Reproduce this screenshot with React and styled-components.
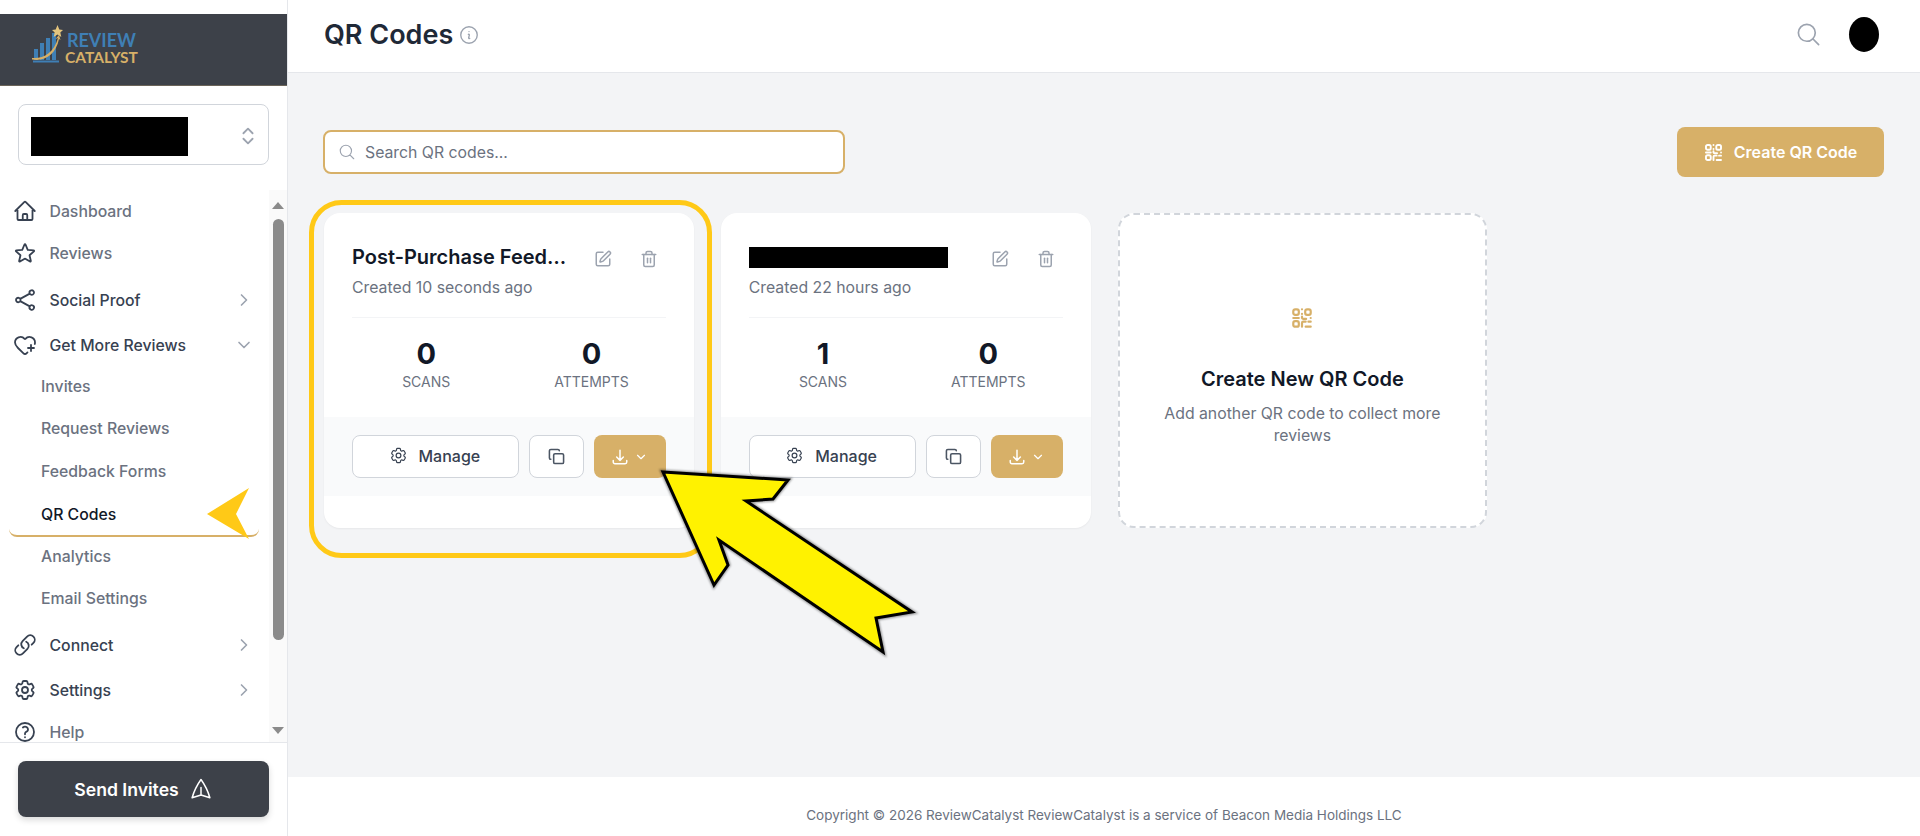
import React from 'react';
import styled, { createGlobalStyle } from 'styled-components';
import { ChevronRight, ChevronDown, HeartPlus, Copy, ChevronsUpDown, SquarePen, Trash2 } from 'lucide-react';
import {
  HiOutlineHome,
  HiOutlineStar,
  HiOutlineShare,
  HiOutlineLink,
  HiOutlineCog6Tooth,
  HiOutlineQuestionMarkCircle,
  HiOutlinePaperAirplane,
  HiOutlineInformationCircle,
  HiOutlineMagnifyingGlass,
  HiOutlineArrowDownTray,
} from 'react-icons/hi2';

const GOLD = '#d7b068';

const GlobalStyle = createGlobalStyle`
  html, body {
    margin: 0;
    padding: 0;
    height: 100%;
    overflow: hidden;
    font-family: Inter, 'Liberation Sans', sans-serif;
    background: #fff;
  }
  * { box-sizing: border-box; }
`;

const Page = styled.div`
  position: relative;
  display: flex;
  width: 1920px;
  height: 836px;
  overflow: hidden;
`;

const Sidebar = styled.aside`
  width: 288px;
  height: 100%;
  flex: none;
  display: flex;
  flex-direction: column;
  padding-top: 14px;
  background: #fff;
  border-right: 1px solid #e5e7eb;
`;

const Brand = styled.div`
  height: 72px;
  flex: none;
  display: flex;
  align-items: flex-start;
  gap: 2px;
  padding: 11px 0 0 31px;
  background: #3d4149;
  border-bottom: 1px solid #6b6459;
`;

const BrandText = styled.div`
  display: flex;
  flex-direction: column;
  align-items: center;
  margin-top: 7px;
  font-family: Lato, sans-serif;
  font-weight: 700;
  line-height: 17px;
`;

const BrandLine = styled.span`
  color: ${(p) => p.$color};
  font-size: ${(p) => p.$size}px;
`;

const Selector = styled.div`
  margin: 18px 18px 0;
  height: 61px;
  flex: none;
  display: flex;
  align-items: center;
  justify-content: space-between;
  padding: 3px 9px 0 12px;
  border: 1px solid #d1d5db;
  border-radius: 8px;
  color: #9ca3af;
`;

const Redacted = styled.div`
  background: #000;
  width: ${(p) => p.$w}px;
  height: ${(p) => p.$h}px;
`;

const NavArea = styled.div`
  flex: 1;
  min-height: 0;
  display: flex;
  margin-top: 25px;
`;

const NavList = styled.nav`
  flex: 1;
  min-width: 0;
  overflow: hidden;
`;

const NavRow = styled.div`
  height: 42px;
  margin-top: ${(p) => p.$top || 0}px;
  display: flex;
  align-items: center;
  padding: 0 16px 0 13px;
  font-size: 15.8px;
  font-weight: 500;
  color: ${(p) => (p.$muted ? '#6b7280' : '#374151')};

  & > svg:first-child {
    width: 24px;
    height: 24px;
    color: #374151;
    flex: none;
    margin-right: 12.5px;
    stroke-width: 1.8;
  }
`;

const NavLabel = styled.span`
  flex: 1;
`;

const Caret = styled.span`
  display: flex;
  color: #9ca3af;
  margin-right: -1px;
`;

const SubList = styled.div`
  margin-top: -1px;
`;

const SubItem = styled.div`
  height: ${(p) => (p.$active ? '44.5px' : '42.5px')};
  margin: 0 10px ${(p) => (p.$active ? '-2px' : '0')} 9px;
  padding: ${(p) => (p.$active ? '2px' : '0')} 0 0 32px;
  display: flex;
  align-items: center;
  font-size: 15.8px;
  font-weight: 500;
  color: ${(p) => (p.$active ? '#111827' : '#6b7280')};
  border-bottom: ${(p) => (p.$active ? `2px solid ${GOLD}` : 'none')};
  border-radius: 8px;
`;

const ScrollTrack = styled.div`
  width: 18px;
  flex: none;
  display: flex;
  flex-direction: column;
  align-items: center;
  background: #fafafa;
`;

const ScrollArrow = styled.div`
  width: 0;
  height: 0;
  flex: none;
  margin: ${(p) => (p.$down ? 'auto 0 8px' : '12px 0 10px')};
  border-left: 6.5px solid transparent;
  border-right: 6.5px solid transparent;
  ${(p) => (p.$down ? 'border-top' : 'border-bottom')}: 7px solid #8b8b8b;
`;

const ScrollThumb = styled.div`
  width: 11px;
  height: 421px;
  flex: none;
  background: #8b8b8b;
  border-radius: 6px;
`;

const SidebarFoot = styled.div`
  flex: none;
  height: 94px;
  padding: 18px 18px 0;
  border-top: 1px solid #e5e7eb;
`;

const SendButton = styled.button`
  width: 100%;
  height: 56px;
  display: flex;
  align-items: center;
  justify-content: center;
  gap: 10px;
  border: none;
  border-radius: 8px;
  background: #3d4149;
  color: #fff;
  font-family: inherit;
  font-size: 17.6px;
  font-weight: 600;
  box-shadow: 0 3px 6px rgba(0, 0, 0, 0.15);

  svg {
    width: 24px;
    height: 24px;
    transform: rotate(-90deg);
  }
`;

const Main = styled.main`
  flex: 1;
  min-width: 0;
  display: flex;
  flex-direction: column;
  background: #f3f4f6;
`;

const Header = styled.header`
  height: 73px;
  flex: none;
  display: flex;
  align-items: center;
  padding: 0 41px 3px 36px;
  background: #fff;
  border-bottom: 1px solid #e5e7eb;
`;

const PageTitle = styled.h1`
  margin: 0 5px 0 0;
  font-size: 27px;
  font-weight: 600;
  color: #1f2937;
`;

const InfoIcon = styled(HiOutlineInformationCircle)`
  width: 22px;
  height: 22px;
  color: #9ca3af;
`;

const HeaderRight = styled.div`
  margin-left: auto;
  display: flex;
  align-items: center;
  gap: 27px;
  color: #9ca3af;
`;

const Avatar = styled.div`
  width: 30px;
  height: 35px;
  border-radius: 50%;
  background: #000;
`;

const Content = styled.div`
  flex: 1;
  padding: 54px 36px 0;
`;

const Toolbar = styled.div`
  display: flex;
  align-items: center;
  justify-content: space-between;
`;

const SearchBox = styled.label`
  width: 522px;
  height: 44px;
  margin-left: -1px;
  display: flex;
  align-items: center;
  gap: 9px;
  padding: 0 14px 0 13px;
  background: #fff;
  border: 2px solid ${GOLD};
  border-radius: 8px;
  color: #9ca3af;
`;

const SearchInput = styled.input`
  flex: 1;
  border: none;
  outline: none;
  padding: 0;
  background: transparent;
  font-family: inherit;
  font-size: 15.8px;
  color: #111827;

  &::placeholder {
    color: #6b7280;
    opacity: 1;
  }
`;

const CreateButton = styled.button`
  width: 207px;
  height: 50px;
  display: flex;
  align-items: center;
  justify-content: center;
  gap: 11px;
  border: none;
  border-radius: 8px;
  background: ${GOLD};
  color: #fff;
  font-family: inherit;
  font-size: 16px;
  font-weight: 600;
`;

const CardGrid = styled.div`
  display: grid;
  grid-template-columns: repeat(4, 1fr);
  gap: 27px;
  margin-top: 36px;
`;

const Card = styled.article`
  height: 315px;
  background: #fff;
  border-radius: 16px;
  box-shadow: 0 1px 2px rgba(0, 0, 0, 0.05);
  overflow: hidden;
`;

const CardBody = styled.div`
  height: 204px;
  padding: 28px 28px 0;
`;

const CardHead = styled.div`
  height: 77px;
  border-bottom: 1px solid #f3f4f6;
`;

const TitleRow = styled.div`
  height: 32px;
  display: flex;
  align-items: center;
`;

const CardTitle = styled.h3`
  margin: 0;
  width: 215px;
  flex: none;
  font-size: 20px;
  font-weight: 600;
  color: #111827;
  white-space: nowrap;
  overflow: hidden;
  text-overflow: ellipsis;
`;

const TitleActions = styled.div`
  margin-left: auto;
  margin-right: 8px;
  margin-top: 4px;
  display: flex;
  gap: 28px;
  color: #9ca3af;
`;

const CreatedAt = styled.div`
  margin-top: 4px;
  font-size: 15.8px;
  line-height: 22px;
  color: #6b7280;
`;

const Stats = styled.div`
  display: grid;
  grid-template-columns: 1fr 1fr;
  column-gap: 17px;
  padding-top: 18px;
`;

const Stat = styled.div`
  display: flex;
  flex-direction: column;
  align-items: center;
`;

const StatValue = styled.div`
  font-size: 29px;
  line-height: 36px;
  font-weight: 700;
  color: #111827;
`;

const StatLabel = styled.div`
  font-size: 14px;
  line-height: 20px;
  color: #6b7280;
`;

const CardBand = styled.div`
  height: 79px;
  display: flex;
  gap: 10px;
  padding: 18px 28px 0;
  background: #f9fafb;
`;

const ManageButton = styled.button`
  flex: 1;
  height: 43px;
  display: flex;
  align-items: center;
  justify-content: center;
  gap: 11px;
  padding: 0 2px 2px 0;
  background: #fff;
  border: 1px solid #d1d5db;
  border-radius: 8px;
  color: #374151;
  font-family: inherit;
  font-size: 16px;
  font-weight: 500;
`;

const IconButton = styled.button`
  width: 55px;
  height: 43px;
  flex: none;
  display: flex;
  align-items: center;
  justify-content: center;
  padding: 0;
  background: #fff;
  border: 1px solid #d1d5db;
  border-radius: 8px;
  color: #4b5563;
`;

const DownloadButton = styled.button`
  width: 72px;
  height: 43px;
  flex: none;
  display: flex;
  align-items: center;
  justify-content: center;
  gap: 5px;
  padding: 0;
  background: ${GOLD};
  border: none;
  border-radius: 8px;
  color: #fff;
`;

const NewCard = styled.article`
  height: 315px;
  display: flex;
  flex-direction: column;
  align-items: center;
  padding: 92px 28px 0;
  background: #fff;
  border: 2px dashed #d1d5db;
  border-radius: 16px;
  color: ${GOLD};
`;

const NewTitle = styled.h3`
  margin: 35px 0 0;
  font-size: 20px;
  line-height: 30px;
  font-weight: 600;
  color: #111827;
`;

const NewText = styled.p`
  margin: 9px 0 0;
  font-size: 15.8px;
  line-height: 22px;
  text-align: center;
  color: #6b7280;
`;

const Footer = styled.footer`
  height: 59px;
  flex: none;
  display: flex;
  align-items: center;
  justify-content: center;
  padding-top: 17px;
  background: #fff;
  font-size: 13.5px;
  color: #6b7280;
`;

const Annotations = styled.svg`
  position: absolute;
  left: 0;
  top: 0;
  pointer-events: none;
`;

const QrGlyph = ({ size }) => (
  <svg width={size} height={size} viewBox="0 0 24 24" fill="none" stroke="currentColor" strokeWidth="2.4" strokeLinecap="round" strokeLinejoin="round">
    <rect x="2.5" y="2.5" width="6" height="6" rx="2" />
    <rect x="15.5" y="2.5" width="6" height="6" rx="2" />
    <rect x="2.5" y="15.5" width="6" height="6" rx="2" />
    <path d="M12 2.5v.01M12 7.5v.01" />
    <path d="M2.5 12h6" />
    <path d="M12 10.5v1.5a1.5 1.5 0 0 0 1.5 1h3" />
    <path d="M21.5 12v.01" />
    <path d="M12 21.5v-4a1.5 1.5 0 0 1 1.5-1.5h2.5" />
    <path d="M19 16h2.5M16 21.5h5.5" />
  </svg>
);

const QrCard = ({ title, redacted, created, scans }) => (
  <Card>
    <CardBody>
      <CardHead>
        <TitleRow>
          {redacted ? (
            <CardTitle>
              <Redacted $w={199} $h={21} />
            </CardTitle>
          ) : (
            <CardTitle>{title}</CardTitle>
          )}
          <TitleActions>
            <SquarePen size={18} />
            <Trash2 size={18} />
          </TitleActions>
        </TitleRow>
        <CreatedAt>{created}</CreatedAt>
      </CardHead>
      <Stats>
        <Stat>
          <StatValue>{scans}</StatValue>
          <StatLabel>SCANS</StatLabel>
        </Stat>
        <Stat>
          <StatValue>0</StatValue>
          <StatLabel>ATTEMPTS</StatLabel>
        </Stat>
      </Stats>
    </CardBody>
    <CardBand>
      <ManageButton>
        <HiOutlineCog6Tooth size={19} />
        Manage
      </ManageButton>
      <IconButton>
        <Copy size={17} strokeWidth={2.2} />
      </IconButton>
      <DownloadButton>
        <HiOutlineArrowDownTray size={18} strokeWidth={2} />
        <ChevronDown size={14} />
      </DownloadButton>
    </CardBand>
  </Card>
);

export default function App() {
  return (
    <Page>
      <GlobalStyle />
      <Sidebar>
        <Brand>
          <svg width="32" height="40" viewBox="0 0 32 40">
            <rect x="3" y="24" width="4" height="11" fill="#3f7fb5" />
            <rect x="9" y="18" width="4" height="17" fill="#3f7fb5" />
            <rect x="15" y="13" width="4" height="22" fill="#3f7fb5" />
            <rect x="21" y="8" width="4" height="27" fill="#3f7fb5" />
            <rect x="2" y="35.5" width="26" height="2" fill="#3f7fb5" />
            <path d="M1 33 C12 34 23 28 27 13 L24.5 14 L28 10 L29.5 15 L28 14 C25 29 14 37 1 34.5 Z" fill="#d7b068" />
            <path d="M26.5 0 L28.3 4.5 L32 5 L29.3 7.5 L30.3 12 L26.5 9.6 L22.7 12 L23.7 7.5 L21 5 L24.7 4.5 Z" fill="#e5c57d" />
          </svg>
          <BrandText>
            <BrandLine $color="#3f7fb5" $size={18}>REVIEW</BrandLine>
            <BrandLine $color="#d7b068" $size={15.5}>CATALYST</BrandLine>
          </BrandText>
        </Brand>
        <Selector>
          <Redacted $w={157} $h={39} />
          <ChevronsUpDown size={22} strokeWidth={2} />
        </Selector>
        <NavArea>
          <NavList>
            <NavRow $muted>
              <HiOutlineHome />
              <NavLabel>Dashboard</NavLabel>
            </NavRow>
            <NavRow $muted>
              <HiOutlineStar />
              <NavLabel>Reviews</NavLabel>
            </NavRow>
            <NavRow $top={5}>
              <HiOutlineShare />
              <NavLabel>Social Proof</NavLabel>
              <Caret>
                <ChevronRight size={20} />
              </Caret>
            </NavRow>
            <NavRow $top={3}>
              <HeartPlus />
              <NavLabel>Get More Reviews</NavLabel>
              <Caret>
                <ChevronDown size={20} />
              </Caret>
            </NavRow>
            <SubList>
              <SubItem>Invites</SubItem>
              <SubItem>Request Reviews</SubItem>
              <SubItem>Feedback Forms</SubItem>
              <SubItem $active>QR Codes</SubItem>
              <SubItem>Analytics</SubItem>
              <SubItem>Email Settings</SubItem>
            </SubList>
            <NavRow $top={4}>
              <HiOutlineLink />
              <NavLabel>Connect</NavLabel>
              <Caret>
                <ChevronRight size={20} />
              </Caret>
            </NavRow>
            <NavRow $top={3}>
              <HiOutlineCog6Tooth />
              <NavLabel>Settings</NavLabel>
              <Caret>
                <ChevronRight size={20} />
              </Caret>
            </NavRow>
            <NavRow $muted>
              <HiOutlineQuestionMarkCircle />
              <NavLabel>Help</NavLabel>
            </NavRow>
          </NavList>
          <ScrollTrack>
            <ScrollArrow />
            <ScrollThumb />
            <ScrollArrow $down />
          </ScrollTrack>
        </NavArea>
        <SidebarFoot>
          <SendButton>
            Send Invites
            <HiOutlinePaperAirplane />
          </SendButton>
        </SidebarFoot>
      </Sidebar>

      <Main>
        <Header>
          <PageTitle>QR Codes</PageTitle>
          <InfoIcon />
          <HeaderRight>
            <HiOutlineMagnifyingGlass size={27} />
            <Avatar />
          </HeaderRight>
        </Header>
        <Content>
          <Toolbar>
            <SearchBox>
              <HiOutlineMagnifyingGlass size={18} />
              <SearchInput placeholder="Search QR codes..." />
            </SearchBox>
            <CreateButton>
              <QrGlyph size={19} />
              Create QR Code
            </CreateButton>
          </Toolbar>
          <CardGrid>
            <QrCard title="Post-Purchase Feedback Survey" created="Created 10 seconds ago" scans={0} />
            <QrCard redacted created="Created 22 hours ago" scans={1} />
            <NewCard>
              <QrGlyph size={22} />
              <NewTitle>Create New QR Code</NewTitle>
              <NewText>Add another QR code to collect more reviews</NewText>
            </NewCard>
          </CardGrid>
        </Content>
        <Footer>Copyright © 2026 ReviewCatalyst ReviewCatalyst is a service of Beacon Media Holdings LLC</Footer>
      </Main>

      <Annotations width="1920" height="836" viewBox="0 0 1920 836">
        <defs>
          <filter id="arrowShadow" x="-10%" y="-10%" width="120%" height="120%">
            <feGaussianBlur stdDeviation="0.8" />
          </filter>
        </defs>
        <rect x="311.5" y="202.5" width="398" height="353" rx="30" fill="none" stroke="#ffc917" strokeWidth="5" />
        <polygon points="207,514 249,488 236,514 249,539" fill="#ffc917" />
        <polygon
          points="663,472 788,480 773,499 746,501 912,612 876,618 883,652 719,540 728,565 714,585"
          fill="none"
          stroke="#000"
          strokeOpacity="0.4"
          strokeWidth="5"
          filter="url(#arrowShadow)"
        />
        <polygon
          points="663,472 788,480 773,499 746,501 912,612 876,618 883,652 719,540 728,565 714,585"
          fill="#fff200"
          stroke="#000"
          strokeWidth="3"
          strokeLinejoin="miter"
        />
      </Annotations>
    </Page>
  );
}
